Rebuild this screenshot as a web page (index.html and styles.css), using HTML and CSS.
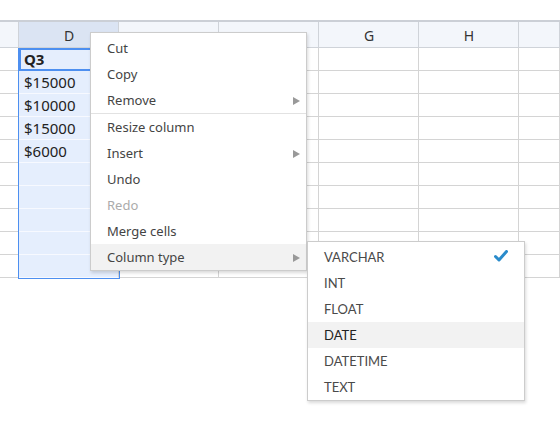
FILE: index.html
```html
<!DOCTYPE html>
<html lang="en">
<head>
    <meta charset="UTF-8">
    <meta name="viewport" content="width=device-width, initial-scale=1.0">
    <title>Sheet - Column menu</title>
    <link rel="stylesheet" href="styles.css">
</head>
<body>
    <div class="sheet-wrap">
        <table class="sheet">
            <colgroup>
                <col class="col-index">
                <col class="col-data">
                <col class="col-data">
                <col class="col-data">
                <col class="col-data">
                <col class="col-data">
                <col class="col-rest">
            </colgroup>
            <thead>
                <tr>
                    <th></th>
                    <th class="selected">D</th>
                    <th></th>
                    <th></th>
                    <th>G</th>
                    <th>H</th>
                    <th></th>
                </tr>
            </thead>
            <tbody>
                <tr><td></td><td class="selected bold">Q3</td><td></td><td></td><td></td><td></td><td></td></tr>
                <tr><td></td><td class="selected">$15000</td><td></td><td></td><td></td><td></td><td></td></tr>
                <tr><td></td><td class="selected">$10000</td><td></td><td></td><td></td><td></td><td></td></tr>
                <tr><td></td><td class="selected">$15000</td><td></td><td></td><td></td><td></td><td></td></tr>
                <tr><td></td><td class="selected">$6000</td><td></td><td></td><td></td><td></td><td></td></tr>
                <tr><td></td><td class="selected"></td><td></td><td></td><td></td><td></td><td></td></tr>
                <tr><td></td><td class="selected"></td><td></td><td></td><td></td><td></td><td></td></tr>
                <tr><td></td><td class="selected"></td><td></td><td></td><td></td><td></td><td></td></tr>
                <tr><td></td><td class="selected"></td><td></td><td></td><td></td><td></td><td></td></tr>
                <tr><td></td><td class="selected"></td><td></td><td></td><td></td><td></td><td></td></tr>
            </tbody>
        </table>

        <!-- selection outlines -->
        <div class="selection-area"></div>
        <div class="active-cell"></div>

        <!-- context menu -->
        <ul class="context-menu">
            <li>Cut</li>
            <li>Copy</li>
            <li class="has-sub">Remove</li>
            <li class="separator"></li>
            <li>Resize column</li>
            <li class="has-sub">Insert</li>
            <li>Undo</li>
            <li class="disabled">Redo</li>
            <li>Merge cells</li>
            <li class="has-sub active">Column type</li>
        </ul>

        <ul class="sub-menu">
            <li class="checked">VARCHAR
                <svg class="check" width="14" height="12" viewBox="0 0 14 12">
                    <path d="M1.5 6.5 L5 10 L12.5 1.5" fill="none" stroke="#2a8bcb" stroke-width="3" stroke-linecap="round" stroke-linejoin="round"/>
                </svg>
            </li>
            <li>INT</li>
            <li>FLOAT</li>
            <li class="active">DATE</li>
            <li>DATETIME</li>
            <li>TEXT</li>
        </ul>
    </div>
</body>
</html>
```

FILE: styles.css
```css
body {
    margin: 0;
    background: #fff;
    font-family: 'Noto Sans', 'Open Sans', sans-serif;
    color: #333;
    overflow: hidden;
}
.sheet-wrap {
    position: relative;
    width: 560px;
    height: 425px;
    padding-top: 20px;
    box-sizing: border-box;
}
.sheet {
    border-collapse: separate;
    border-spacing: 0;
    table-layout: fixed;
    width: 560px;
    border-top: 2px solid #cbcfd6;
}
.col-index {
    width: 19px;
}
.col-data {
    width: 100px;
}
.col-rest {
    width: 41px;
}
.sheet th,
.sheet td {
    padding: 0 4px 0 5px;
    border-right: 1px solid #d4d4d4;
    border-bottom: 1px solid #d4d4d4;
    white-space: nowrap;
    overflow: hidden;
}
.sheet th {
    height: 26px;
    padding-top: 2px;
    box-sizing: border-box;
    background: #f3f6fb;
    font-weight: normal;
    font-size: 14px;
    color: #333;
    text-align: center;
    border-right-color: #cfd3d9;
    border-bottom-color: #cfd3d9;
}
.sheet th.selected {
    background: #dbe4f3;
}
.sheet td {
    height: 22px;
    font-size: 15px;
    color: #222;
    line-height: 22px;
}
.sheet td.selected {
    background: #e5eefd;
    border-bottom-color: #f7f9ff;
}
.sheet td.bold {
    font-weight: bold;
}

/* selection */
.selection-area {
    position: absolute;
    left: 18px;
    top: 48px;
    width: 100px;
    height: 229px;
    border: 1px solid #4d8ff0;
}
.active-cell {
    position: absolute;
    left: 19px;
    top: 48px;
    width: 96px;
    height: 19px;
    border: 2px solid #4d8ff0;
}

/* menus */
.context-menu,
.sub-menu {
    position: absolute;
    list-style: none;
    margin: 0;
    background: #fff;
    border: 1px solid #cccccc;
    box-shadow: 1px 2px 3px rgba(0, 0, 0, 0.15);
    box-sizing: border-box;
}
.context-menu {
    left: 90px;
    top: 32px;
    width: 217px;
    padding: 2px 0 0;
    font-family: 'Noto Sans', 'Open Sans', sans-serif;
}
.sub-menu {
    left: 307px;
    top: 241px;
    width: 218px;
    padding: 2px 0 0;
    font-family: Lato, 'Noto Sans', sans-serif;
}
.context-menu li,
.sub-menu li {
    position: relative;
    height: 26px;
    line-height: 26px;
    padding-left: 16px;
    font-size: 13px;
    color: #444;
}
.sub-menu li {
    color: #4a4a4a;
}
.context-menu li.separator {
    height: 1px;
    padding: 0;
    background: #e2e2e2;
}
.context-menu li.disabled {
    color: #ababab;
}
.context-menu li.active,
.sub-menu li.active {
    background: #f2f2f2;
}
.sub-menu li.active {
    color: #222;
}
.has-sub::after {
    content: "";
    position: absolute;
    right: 6px;
    top: 10px;
    border-left: 7px solid #999;
    border-top: 4px solid transparent;
    border-bottom: 4px solid transparent;
}
.check {
    position: absolute;
    right: 16px;
    top: 6px;
}
```
